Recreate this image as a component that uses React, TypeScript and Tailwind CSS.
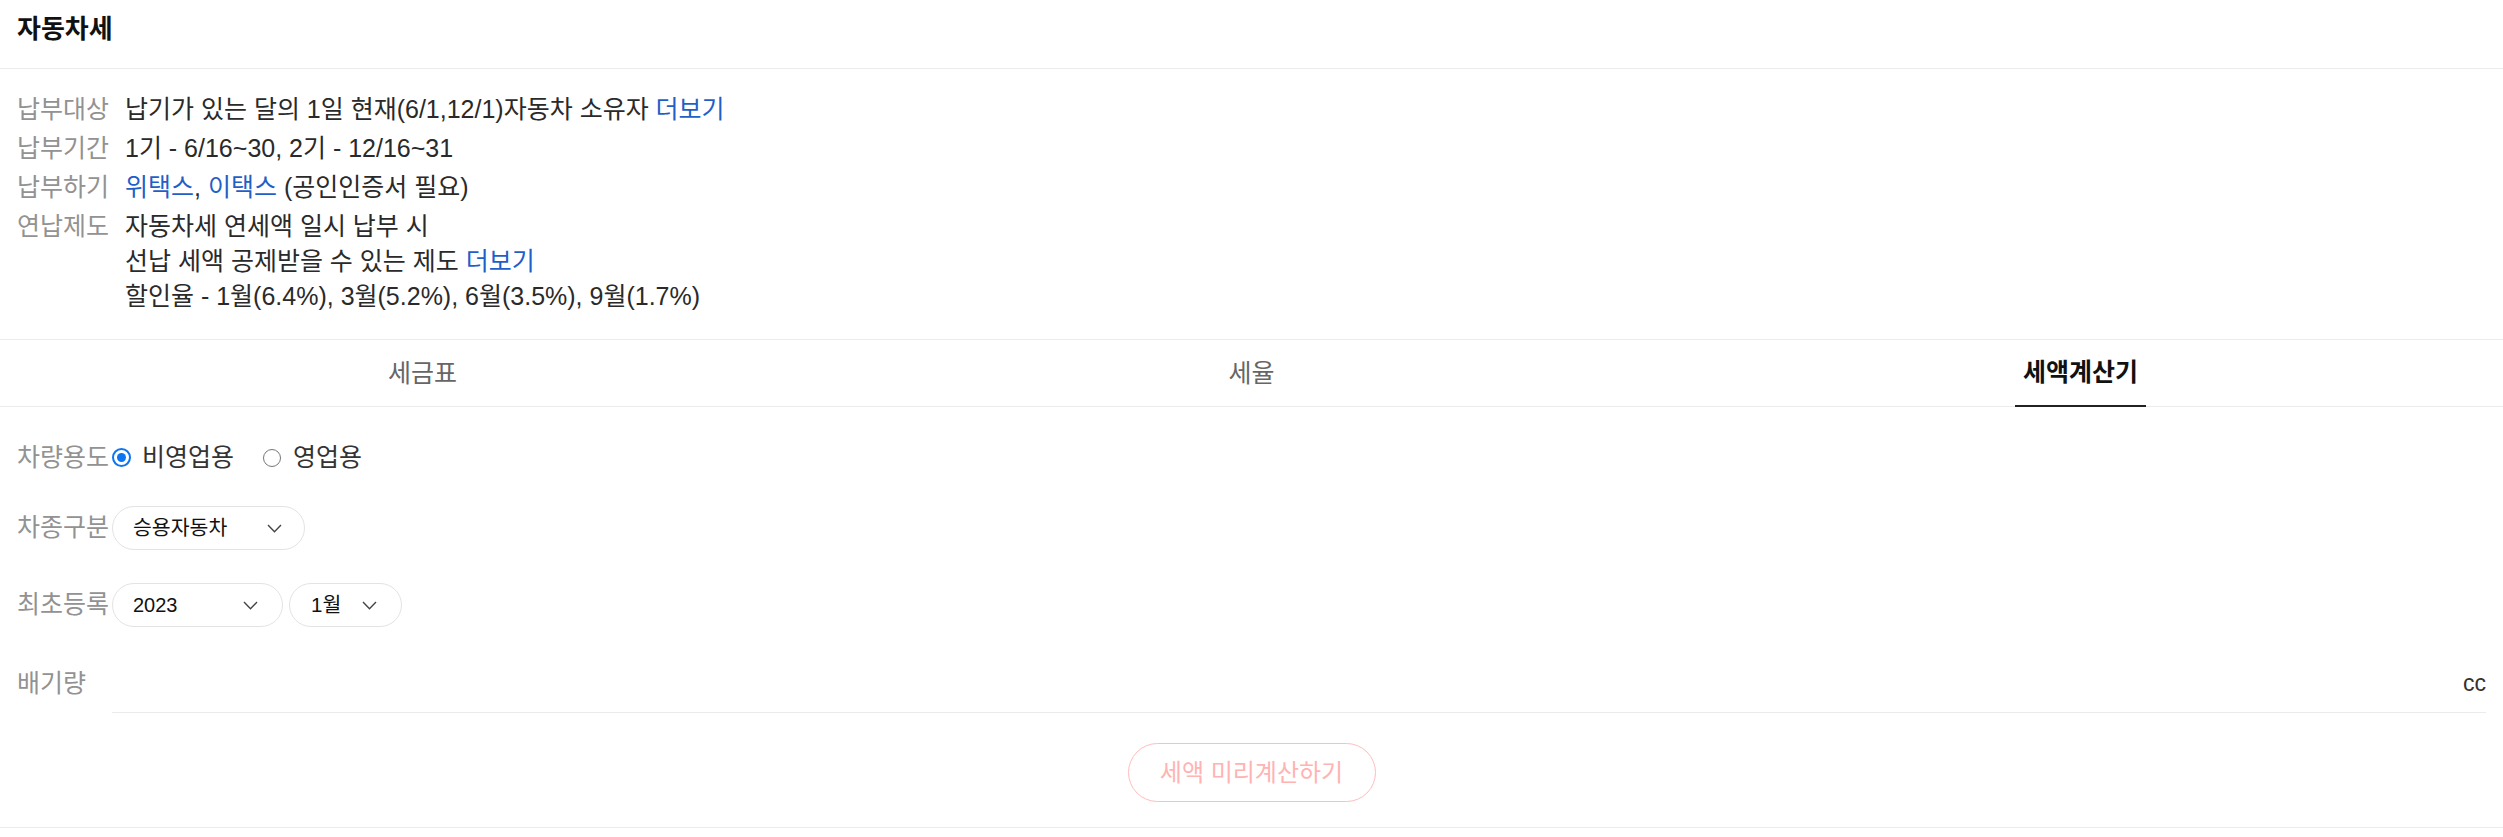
import React from "react";

const Chevron = () => (
  <svg width="15" height="9" viewBox="0 0 15 9" fill="none" className="shrink-0">
    <polyline points="1,1 7.5,7.8 14,1" stroke="#444" strokeWidth="1.4" fill="none" />
  </svg>
);

function InfoRow({ label, children }: { label: string; children: React.ReactNode }) {
  return (
    <div className="flex">
      <div className="w-[108px] shrink-0 text-[#929292]">{label}</div>
      <div className="text-[#2a2a2a]">{children}</div>
    </div>
  );
}

const Link = ({ children }: { children: React.ReactNode }) => (
  <span className="text-[#1f5fc7]">{children}</span>
);

export default function App() {
  return (
    <div className="w-full bg-white text-[#222] font-['Liberation_Sans','Noto_Sans_CJK_KR',sans-serif]">
      {/* Header */}
      <div className="h-[69px] border-b border-[#ebebeb] px-[17px] pt-[12px]">
        <h1 className="text-[26px] font-bold leading-[35px] text-[#111]">자동차세</h1>
      </div>

      {/* Info */}
      <div className="flex flex-col gap-[4px] border-b border-[#ebebeb] px-[17px] pt-[23px] pb-[25px] text-[25px] leading-[35px]">
        <InfoRow label="납부대상">
          납기가 있는 달의 1일 현재(6/1,12/1)자동차 소유자 <Link>더보기</Link>
        </InfoRow>
        <InfoRow label="납부기간">1기 - 6/16~30, 2기 - 12/16~31</InfoRow>
        <InfoRow label="납부하기">
          <Link>위택스</Link>, <Link>이택스</Link> (공인인증서 필요)
        </InfoRow>
        <InfoRow label="연납제도">
          <div>자동차세 연세액 일시 납부 시</div>
          <div>
            선납 세액 공제받을 수 있는 제도 <Link>더보기</Link>
          </div>
          <div>할인율 - 1월(6.4%), 3월(5.2%), 6월(3.5%), 9월(1.7%)</div>
        </InfoRow>
      </div>

      {/* Tabs */}
      <div className="flex h-[67px] border-b border-[#ebebeb] px-[8px] text-[25px]">
        <div className="flex flex-1 justify-center -mb-px">
          <span className="flex h-full items-center text-[#666]">세금표</span>
        </div>
        <div className="flex flex-1 justify-center -mb-px">
          <span className="flex h-full items-center text-[#666]">세율</span>
        </div>
        <div className="flex flex-1 justify-center -mb-px">
          <span className="flex h-full items-center border-b-2 border-[#222] px-[8px] font-bold text-[#111]">
            세액계산기
          </span>
        </div>
      </div>

      {/* Calculator */}
      <div className="border-b border-[#ebebeb] px-[17px] pt-[33px] pb-[25px] text-[25px]">
        <div className="flex h-[35px] items-center">
          <div className="w-[95px] shrink-0 text-[#929292]">차량용도</div>
          <div className="flex items-center">
            <span className="flex h-[19px] w-[19px] items-center justify-center rounded-full border-2 border-[#0b75f4]">
              <span className="h-[9px] w-[9px] rounded-full bg-[#0b75f4]" />
            </span>
            <span className="ml-[11px] text-[#333]">비영업용</span>
            <span className="ml-[29px] h-[18px] w-[18px] rounded-full border-[1.5px] border-[#767676]" />
            <span className="ml-[12px] text-[#333]">영업용</span>
          </div>
        </div>

        <div className="mt-[31px] flex h-[44px] items-center">
          <div className="w-[95px] shrink-0 text-[#929292]">차종구분</div>
          <div className="flex h-[44px] w-[193px] items-center justify-between rounded-full border border-[#e3e3e3] pl-[20px] pr-[22px] text-[20.5px] text-[#111]">
            <span>승용자동차</span>
            <Chevron />
          </div>
        </div>

        <div className="mt-[33px] flex h-[44px] items-center">
          <div className="w-[95px] shrink-0 text-[#929292]">최초등록</div>
          <div className="flex items-center gap-[6px]">
            <div className="flex h-[44px] w-[171px] items-center justify-between rounded-full border border-[#e3e3e3] pl-[20px] pr-[24px] text-[20px] text-[#111]">
              <span>2023</span>
              <Chevron />
            </div>
            <div className="flex h-[44px] w-[113px] items-center justify-between rounded-full border border-[#e3e3e3] pl-[21px] pr-[24px] text-[20.5px] text-[#111]">
              <span>1월</span>
              <Chevron />
            </div>
          </div>
        </div>

        <div className="mt-[28px] flex h-[58px]">
          <div className="w-[95px] shrink-0 self-center text-[#929292]">배기량</div>
          <div className="flex flex-1 items-center justify-end border-b border-[#ebebeb] text-[23px] text-[#333]">
            cc
          </div>
        </div>

        <div className="mt-[30px] flex justify-center">
          <button className="flex h-[59px] w-[248px] items-center justify-center rounded-full border border-[#ffbdbd] bg-white text-[24px] text-[#ffb3b3]">
            세액 미리계산하기
          </button>
        </div>
      </div>
    </div>
  );
}
